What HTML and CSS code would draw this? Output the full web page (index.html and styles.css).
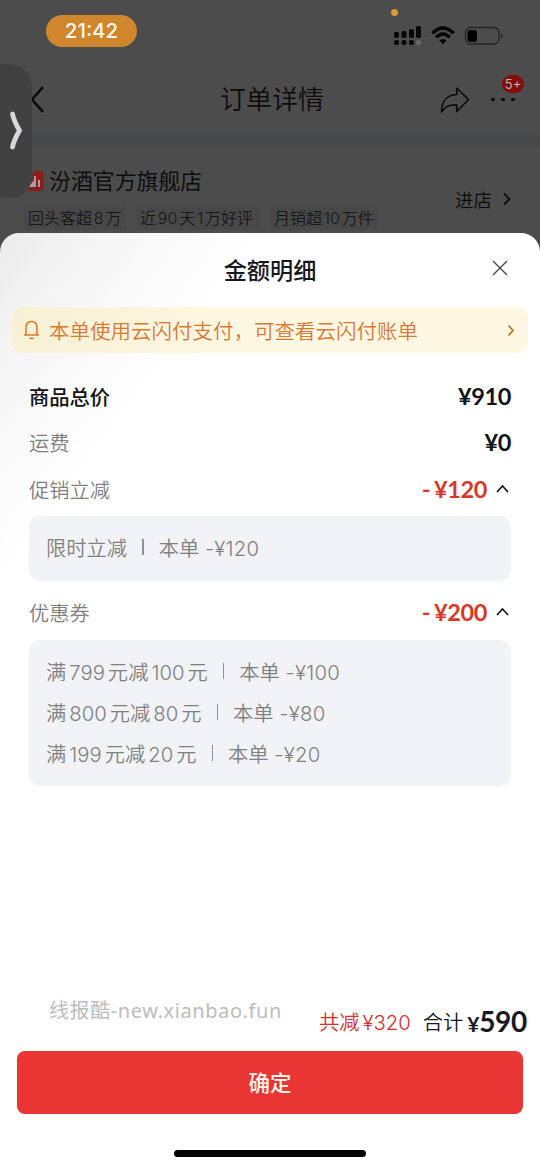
FILE: index.html
```html
<!DOCTYPE html>
<html lang="zh-CN">
<head>
<meta charset="utf-8">
<title>订单详情</title>
<link rel="stylesheet" href="styles.css">
</head>
<body>
<div class="screen">
  <div class="backdrop">
    <div class="status">
      <span class="clock">21:42</span>
      <svg class="status-icons" width="112" height="24" viewBox="0 0 112 24">
        <g fill="#050505">
          <rect x="1" y="8" width="5" height="6" rx="1.8"/><rect x="8.500" y="7" width="5" height="7" rx="1.800"/><rect x="16" y="5" width="5" height="9" rx="1.800"/><rect x="23" y="2" width="5" height="12" rx="1.800"/>
          <rect x="1" y="16" width="5" height="5" rx="2"/><rect x="8.500" y="16" width="5" height="5" rx="2"/><rect x="16" y="16" width="5" height="5" rx="2"/>
        </g>
        <rect x="23" y="16" width="5" height="5" rx="2" fill="#6a6a6a"/>
        <g fill="none" stroke="#050505" stroke-width="3.300">
          <path d="M39.300 9.300Q50 -1.200 60.700 9.300"/><path d="M43.200 13.300Q50 6.600 56.800 13.300"/>
        </g>
        <path d="M46.500 16.600Q50 13.600 53.500 16.600L50 20.300Z" fill="#050505"/>
        <rect x="72.500" y="3.500" width="33.500" height="16.500" rx="5" fill="none" stroke="#252525" stroke-width="1.300"/>
        <rect x="74.500" y="6" width="9.500" height="12" rx="2.500" fill="#000"/>
        <path d="M108 9Q110.500 12 108 14.500Z" fill="#202020"/>
      </svg>
      <i class="mic-dot"></i>
    </div>
    <div class="nav">
      <svg class="back" width="14" height="32" viewBox="0 0 14 32"><path d="M12 3L1 15.500L12 28" fill="none" stroke="#080808" stroke-width="2.600"/></svg>
      <h1 class="nav-title">订单详情</h1>
      <svg class="share" width="30" height="28" viewBox="0 0 30 28"><path d="M1.500 26C1.500 15.500 7 9 16.800 8.500V2L28.500 13.500L16.800 25.500V19C9 18.500 5 20.500 1.500 26Z" fill="none" stroke="#0a0a0a" stroke-width="1.700" stroke-linejoin="round"/></svg>
      <div class="more"><i></i><i></i><i></i><span class="badge">5+</span></div>
    </div>
    <div class="divider"></div>
    <div class="store">
      <div class="store-info">
        <div class="store-name"><svg class="logo" width="17" height="21" viewBox="0 0 17 21"><path d="M6 0H13Q16.500 0 16.500 4V16Q16.500 20 12.500 20H0L5 14Z" fill="#8b1c17"/><path d="M4 15L6 12V15ZM8 5V16M12 9V16" fill="#aaa" stroke="#aaa" stroke-width="1.800"/></svg><span>汾酒官方旗舰店</span></div>
        <div class="tags"><span class="tag t1">回头客超<b>8</b>万</span><span class="tag t2">近<b>90</b>天<b>1</b>万好评</span><span class="tag t3">月销超<b>10</b>万件</span></div>
      </div>
      <div class="enter"><span>进店</span><svg width="10" height="14" viewBox="0 0 10 14"><path d="M2 1.500L7.500 7L2 12.500" fill="none" stroke="#0b0b0b" stroke-width="1.800"/></svg></div>
    </div>
    <div class="drawer-tab"><svg width="14" height="40" viewBox="0 0 14 40"><path d="M2.500 3Q4 10 9.500 19.500Q4 29 2.500 36" fill="none" stroke="#d8d8da" stroke-width="4.800" stroke-linecap="round" stroke-linejoin="round"/></svg></div>
  </div>

  <section class="sheet">
    <header class="sheet-head">
      <h2>金额明细</h2>
      <svg class="close" width="16" height="16" viewBox="0 0 16 16"><path d="M1 1L15 15M15 1L1 15" stroke="#444" stroke-width="1.400"/></svg>
    </header>
    <div class="notice">
      <svg width="17" height="20" viewBox="0 0 17 20"><path d="M3 14.500V8Q3 1.500 8.500 1.500T14 8V14.500M1 15H16M6.500 18.200H10.500" fill="none" stroke="#df762b" stroke-width="1.500"/></svg>
      <span>本单使用云闪付支付，可查看云闪付账单</span>
      <svg class="notice-arrow" width="8" height="13" viewBox="0 0 8 13"><path d="M1.500 1.500L6 6.500L1.500 11.500" fill="none" stroke="#c87022" stroke-width="1.700"/></svg>
    </div>
    <div class="details">
      <div class="row total"><span>商品总价</span><strong>¥910</strong></div>
      <div class="row shipping"><span>运费</span><strong>¥0</strong></div>
      <div class="row promo"><span>促销立减</span><strong class="discount"><em>-</em>¥120</strong><svg width="13" height="9" viewBox="0 0 13 9"><path d="M1 8L6.500 2L12 8" fill="none" stroke="#171717" stroke-width="1.700"/></svg></div>
      <div class="box one"><p class="line"><span>限时立减</span><i class="bar"></i><span>本单 <b class="off">-¥120</b></span></p></div>
      <div class="row coupon"><span>优惠券</span><strong class="discount"><em>-</em>¥200</strong><svg width="13" height="9" viewBox="0 0 13 9"><path d="M1 8L6.500 2L12 8" fill="none" stroke="#171717" stroke-width="1.700"/></svg></div>
      <div class="box three">
        <p class="line"><span>满<b class="n">799</b>元减<b class="n">100</b>元</span><i class="bar"></i><span>本单 <b class="off">-¥100</b></span></p>
        <p class="line"><span>满<b class="n">800</b>元减<b class="n">80</b>元</span><i class="bar"></i><span>本单 <b class="off">-¥80</b></span></p>
        <p class="line"><span>满<b class="n">199</b>元减<b class="n">20</b>元</span><i class="bar"></i><span>本单 <b class="off">-¥20</b></span></p>
      </div>
    </div>
    <footer class="footer">
      <div class="summary">
        <span class="site">线报酷-new.xianbao.fun</span>
        <span class="saved">共减<b>¥320</b></span>
        <span class="sum">合计</span><strong class="price"><small>¥</small>590</strong>
      </div>
      <button class="confirm">确定</button>
      <div class="home"></div>
    </footer>
  </section>
</div>
</body>
</html>
```

FILE: styles.css
```css
* { box-sizing: border-box; }
body { margin: 0; background: #fff; font-family: Inter, "Noto Sans CJK SC", sans-serif; }
h1, h2, p { margin: 0; }
b { font-weight: inherit; }
svg { display: block; flex: none; }
.screen { width: 540px; height: 1168px; overflow: hidden; background: #4c4c4c; }

.backdrop { position: relative; height: 233px; background: #4c4c4c; color: #0c0c0c; }
.status { position: relative; height: 64px; padding: 15px 35px 0 46px; display: flex; justify-content: space-between; }
.clock { width: 91px; height: 32px; border-radius: 16px; background: #cf862d; color: #fff8eb; font-size: 20.500px; font-weight: 450; line-height: 32px; text-align: center; }
.status-icons { margin-top: 9px; }
.mic-dot { position: absolute; left: 391px; top: 9px; width: 7px; height: 7px; border-radius: 50%; background: #df982e; }
.nav { height: 71px; padding: 0 25px 0 31px; display: flex; align-items: center; }
.nav-title { margin-left: 175px; font-size: 26px; line-height: 38px; font-weight: 350; white-space: nowrap; }
.share { margin-left: 116px; }
.more { position: relative; width: 24px; margin-left: 21px; display: flex; justify-content: space-between; }
.more i { width: 3.500px; height: 3.500px; border-radius: 50%; background: #090909; }
.badge { position: absolute; left: 11px; top: -23px; width: 22px; height: 18px; border-radius: 9px; background: #850d09; color: #b9b4b4; font-size: 13px; line-height: 18px; text-align: center; }
.divider { height: 11px; background: #464749; }
.store { height: 87px; padding: 20px 28px 0 24px; display: flex; justify-content: space-between; }
.store-name { display: flex; align-items: center; gap: 6px; height: 30px; padding-left: 3px; font-size: 21.900px; line-height: 30px; }
.store-name span { margin-left: -1px; }
.logo { position: relative; z-index: 1; }
.tags { position: relative; z-index: 1; display: flex; margin-top: 10px; }
.tag { height: 24px; padding: 0 4px; background: #484848; color: #171717; font-size: 16px; line-height: 24px; font-weight: 350; white-space: nowrap; }
.tag b { margin: 0 1.800px; }
.t1 { width: 102px; margin-right: 10px; }
.t2 { width: 124px; margin-right: 10px; }
.enter { display: flex; align-items: center; gap: 10px; height: 66px; font-size: 18.500px; font-weight: 350; }
.drawer-tab { position: absolute; left: 0; top: 64px; width: 32px; height: 134px; padding: 47px 0 0 10px; border-radius: 0 22px 22px 0; background: #414141; }

.sheet { height: 935px; border-radius: 19px 19px 0 0; display: flex; flex-direction: column; background: linear-gradient(127deg, #ebebeb 0, #f5f5f5 80px, #fff 210px); }
.sheet-head { position: relative; height: 74px; text-align: center; }
.sheet-head h2 { color: #171720; font-size: 23.200px; line-height: 76px; font-weight: 500; }
.close { position: absolute; right: 32px; top: 27px; }
.notice { height: 46px; margin: 0 12px; padding: 0 13px 0 11px; display: flex; align-items: center; gap: 9px; border-radius: 10px; background: linear-gradient(115deg, #f7f0d4, #fef8e2 40%); color: #d97935; font-size: 20.500px; font-weight: 350; white-space: nowrap; }
.notice-arrow { margin-left: auto; }
.details { padding: 20px 29px 0; color: #808080; }
.row { height: 46px; display: flex; align-items: center; font-size: 20.300px; font-weight: 350; }
.row strong { margin-left: auto; color: #11121a; font-family: Lato, sans-serif; font-size: 23.500px; font-weight: 700; letter-spacing: -.4px; }
.total span { color: #111; font-weight: 500; }
.promo { height: 51px; padding-bottom: 3px; }
.row .discount { color: #db3927; }
.discount em { font-style: normal; margin-right: 4px; }
.row svg { margin: 0 2px 2px 9px; }
.box { padding: 0 17px; border-radius: 11px; background: #f2f3f7; }
.one { height: 65px; padding-top: 10px; }
.coupon { height: 59px; padding-top: 3px; }
.three { height: 146px; padding-top: 10px; }
.line { height: 41.300px; display: flex; align-items: center; font-size: 20.300px; font-weight: 350; white-space: nowrap; }
.line .n { margin: 0 3px; }
.off { letter-spacing: .25px; }
.bar { width: 1.500px; height: 16px; margin: 0 15px; background: #929292; }
.footer { margin-top: auto; height: 172px; }
.summary { height: 55px; padding: 0 13px 5px 49px; display: flex; align-items: center; color: #171822; white-space: nowrap; }
.site { margin-top: -24px; color: #bcbcbc; font-family: "Noto Sans", "Noto Sans CJK SC", sans-serif; font-size: 20px; letter-spacing: .58px; }
.saved { margin-left: auto; color: #d82d2c; font-size: 20.300px; font-weight: 350; }
.saved b { margin-left: 3px; }
.sum { margin: 0 4px 0 12px; font-size: 20.300px; font-weight: 350; }
.price { font-family: Lato, sans-serif; font-size: 28px; font-weight: 700; letter-spacing: -.3px; }
.price small { font-size: 21px; }
.confirm { display: block; width: 506px; height: 63px; margin: 0 17px; padding: 0 0 3px; border: 0; border-radius: 8px; background: #e93533; color: #fff5ec; font: 500 21.500px "Noto Sans CJK SC", sans-serif; }
.home { width: 192px; height: 7px; margin: 36px auto 0; border-radius: 4px; background: #000; }
```
